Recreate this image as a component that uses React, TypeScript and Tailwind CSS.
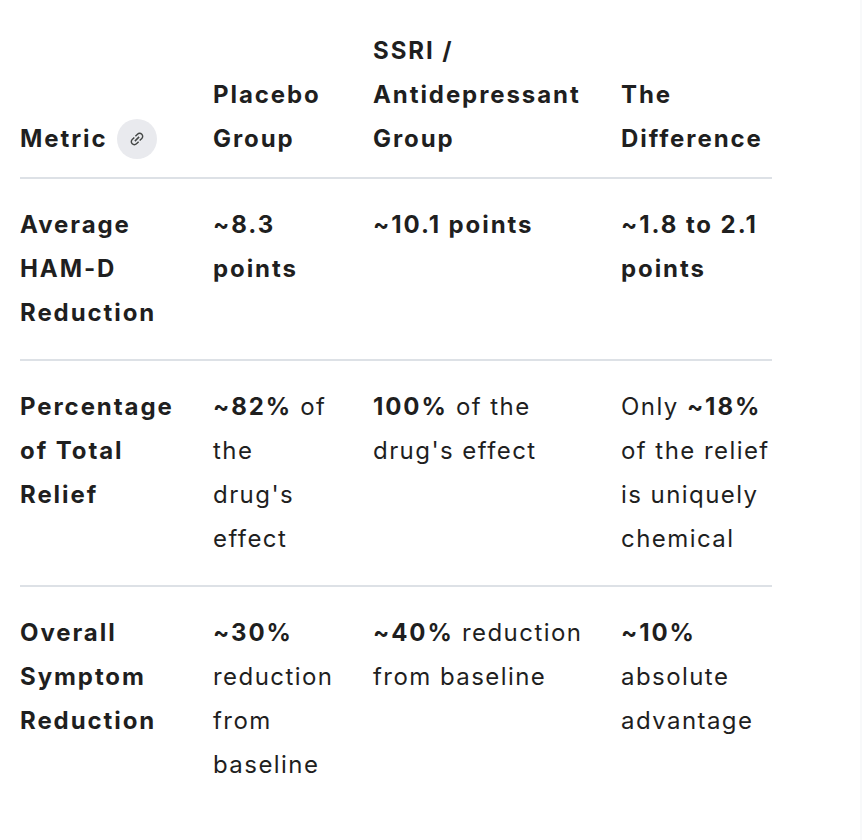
import React from "react";

const LinkIcon = () => (
  <svg width="18" height="18" viewBox="0 0 24 24" className="-rotate-45" fill="#444746">
    <path d="M3.9 12c0-1.71 1.39-3.1 3.1-3.1h4V7H7c-2.760 0-5 2.24-5 5s2.24 5 5 5h4v-1.9H7c-1.71 0-3.1-1.39-3.1-3.1zM8 13h8v-2H8v2zm9-6h-4v1.9h4c1.71 0 3.1 1.39 3.1 3.1s-1.39 3.1-3.1 3.1h-4V17h4c2.76 0 5-2.24 5-5s-2.24-5-5-5z" />
  </svg>
);

const B = ({ children }: { children: React.ReactNode }) => (
  <span className="font-bold tracking-[0.08em]">{children}</span>
);

const th = "pb-4 pr-[35px] text-left align-bottom font-bold tracking-[0.08em]";
const tdH = "py-6 pr-[35px] align-top font-bold tracking-[0.08em]";
const td = "py-6 pr-[35px] align-top";

export default function App() {
  return (
    <div className="flex min-h-[840px] w-full bg-white">
      <div className="flex-1 pl-5 pt-[29px]" style={{ fontFamily: "Inter, 'Noto Sans', sans-serif" }}>
        <table className="table-fixed border-collapse text-[24px] leading-[44px] tracking-[0.06em] text-[#1f1f1f]">
          <colgroup>
            <col className="w-[193px]" />
            <col className="w-[160px]" />
            <col className="w-[248px]" />
            <col className="w-[151px]" />
          </colgroup>
          <thead>
            <tr className="border-b-2 border-[#dde1e6]">
              <th className={th}>
                <span className="inline-flex items-center gap-[9px]">
                  Metric
                  <span className="inline-flex h-10 w-10 items-center justify-center rounded-full bg-[#e9eaee]">
                    <LinkIcon />
                  </span>
                </span>
              </th>
              <th className={th}>Placebo Group</th>
              <th className={th}>SSRI / Antidepressant Group</th>
              <th className="pb-4 text-left align-bottom font-bold tracking-[0.08em]">The Difference</th>
            </tr>
          </thead>
          <tbody>
            <tr className="border-b-2 border-[#dde1e6]">
              <td className={tdH}>Average HAM-D Reduction</td>
              <td className={tdH}>~8.3 points</td>
              <td className={tdH}>~10.1 points</td>
              <td className="py-6 align-top font-bold tracking-[0.08em]">~1.8 to 2.1 points</td>
            </tr>
            <tr className="border-b-2 border-[#dde1e6]">
              <td className={tdH}>Percentage of Total Relief</td>
              <td className={td}><B>~82%</B> of the drug's effect</td>
              <td className={td}><B>100%</B> of the drug's effect</td>
              <td className="py-6 align-top">Only <B>~18%</B> of the relief is uniquely chemical</td>
            </tr>
            <tr>
              <td className={tdH}>Overall Symptom Reduction</td>
              <td className={td}><B>~30%</B> reduction from baseline</td>
              <td className={td}><B>~40%</B> reduction from baseline</td>
              <td className="py-6 align-top"><B>~10%</B> absolute advantage</td>
            </tr>
          </tbody>
        </table>
      </div>
      <div className="w-[2px] bg-[#f8f9fa]" />
    </div>
  );
}
